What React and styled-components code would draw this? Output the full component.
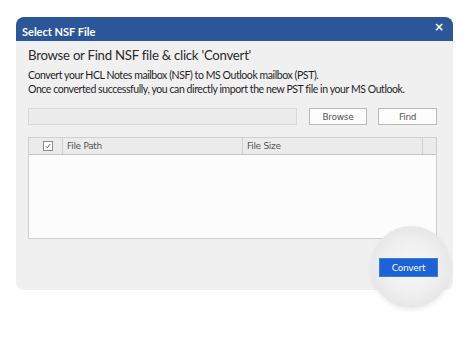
import styled, { createGlobalStyle } from 'styled-components';

const Global = createGlobalStyle`
  body {
    margin: 0;
    background: #fff;
    font-family: Lato, "Open Sans", sans-serif;
  }
`;

const Page = styled.div`
  width: 474px;
  height: 351px;
  padding: 17px 0 0 16px;
  box-sizing: border-box;
`;

const Dialog = styled.div`
  position: relative;
  width: 437px;
  height: 273px;
  background: #f0f0f0;
  border-radius: 8px;
  display: flex;
  flex-direction: column;
`;

const TitleBar = styled.div`
  height: 24px;
  background: #2b579a;
  border-radius: 8px 8px 0 0;
  display: flex;
  align-items: center;
  justify-content: space-between;
  padding: 0 9px 0 6px;
  color: #fff;
`;

const Title = styled.span`
  font-size: 11px;
  font-weight: 700;
  margin-top: 4px;
`;

const Close = styled.span`
  font-family: "DejaVu Sans", sans-serif;
  font-size: 12px;
  font-weight: 700;
  margin-top: -5px;
`;

const Body = styled.div`
  flex: 1;
  display: flex;
  flex-direction: column;
  padding: 4px 16px 0 12px;
`;

const Heading = styled.div`
  font-size: 13.2px;
  letter-spacing: -0.25px;
  color: #2a2a2a;
  line-height: 20px;
  white-space: nowrap;
`;

const Desc = styled.div`
  margin-top: 4px;
  font-size: 10.5px;
  letter-spacing: -0.42px;
  line-height: 13.5px;
  color: #1e1e1e;
  white-space: nowrap;
`;

const Row = styled.div`
  margin-top: 12px;
  display: flex;
  gap: 11px;
  height: 17px;
`;

const PathInput = styled.div`
  width: 268px;
  border: 1px solid #d8d8d8;
  background: #ececec;
  margin-right: 1px;
`;

const Button = styled.div`
  width: 57px;
  border: 1px solid #b9b9b9;
  background: #fdfdfd;
  display: flex;
  align-items: center;
  justify-content: center;
  font-family: "DejaVu Sans", "Noto Sans", sans-serif;
  font-size: 9px;
  letter-spacing: -0.3px;
  color: #555;
`;

const Table = styled.div`
  margin-top: 12px;
  width: 407px;
  height: 100px;
  border: 1px solid #cfcfcf;
  background: #fcfcfc;
  display: flex;
  flex-direction: column;
`;

const Header = styled.div`
  height: 16px;
  background: #ebebeb;
  border-bottom: 1px solid #c4c4c4;
  display: grid;
  grid-template-columns: 34px 180px 180px 1fr;
`;

const Col = styled.div`
  display: flex;
  align-items: center;
  justify-content: ${(p) => (p.center ? 'center' : 'flex-start')};
  padding-left: ${(p) => (p.center ? 0 : 4)}px;
  border-right: ${(p) => (p.last ? 'none' : '1px solid #d0d0d0')};
  font-family: "DejaVu Sans", "Noto Sans", sans-serif;
  font-size: 9px;
  letter-spacing: -0.3px;
  color: #555;
`;

const Check = styled.span`
  width: 8px;
  height: 8px;
  border: 1px solid #8a8a8a;
  background: #fff;
  display: flex;
  align-items: center;
  justify-content: center;
  margin-left: 4px;
`;

const Footer = styled.div`
  margin-top: 19px;
  display: flex;
  justify-content: flex-end;
  width: 410px;
`;

const Glow = styled.div`
  position: absolute;
  left: 355px;
  top: 209px;
  width: 80px;
  height: 82px;
  border-radius: 50%;
  background: radial-gradient(circle at 50% 50%, #f7f7f7 0%, #f0f0f0 45%, #e2e2e2 85%, #d9d9d9 100%);
  box-shadow: 0 2px 4px rgba(0, 0, 0, 0.08);
`;

const ConvertButton = styled.div`
  position: relative;
  width: 59px;
  height: 19px;
  background: #1c63d8;
  border: 1px solid #3b7be0;
  box-sizing: border-box;
  color: #fff;
  display: flex;
  align-items: center;
  justify-content: center;
  font-family: "DejaVu Sans", "Noto Sans", sans-serif;
  font-size: 9px;
  letter-spacing: -0.3px;
`;

export default function App() {
  return (
    <Page>
      <Global />
      <Dialog>
        <TitleBar>
          <Title>Select NSF File</Title>
          <Close>×</Close>
        </TitleBar>
        <Body>
          <Heading>Browse or Find NSF file &amp; click 'Convert'</Heading>
          <Desc>
            Convert your HCL Notes mailbox (NSF) to MS Outlook mailbox (PST).
            <br />
            Once converted successfully, you can directly import the new PST file in your MS Outlook.
          </Desc>
          <Row>
            <PathInput />
            <Button>Browse</Button>
            <Button>Find</Button>
          </Row>
          <Table>
            <Header>
              <Col center>
                <Check>
                  <svg width="6" height="6" viewBox="0 0 6 6">
                    <path d="M0.8 3.2 L2.4 4.8 L5.2 1" stroke="#555" strokeWidth="0.9" fill="none" />
                  </svg>
                </Check>
              </Col>
              <Col>File Path</Col>
              <Col>File Size</Col>
              <Col last />
            </Header>
          </Table>
          <Glow />
          <Footer>
            <ConvertButton>Convert</ConvertButton>
          </Footer>
        </Body>
      </Dialog>
    </Page>
  );
}
